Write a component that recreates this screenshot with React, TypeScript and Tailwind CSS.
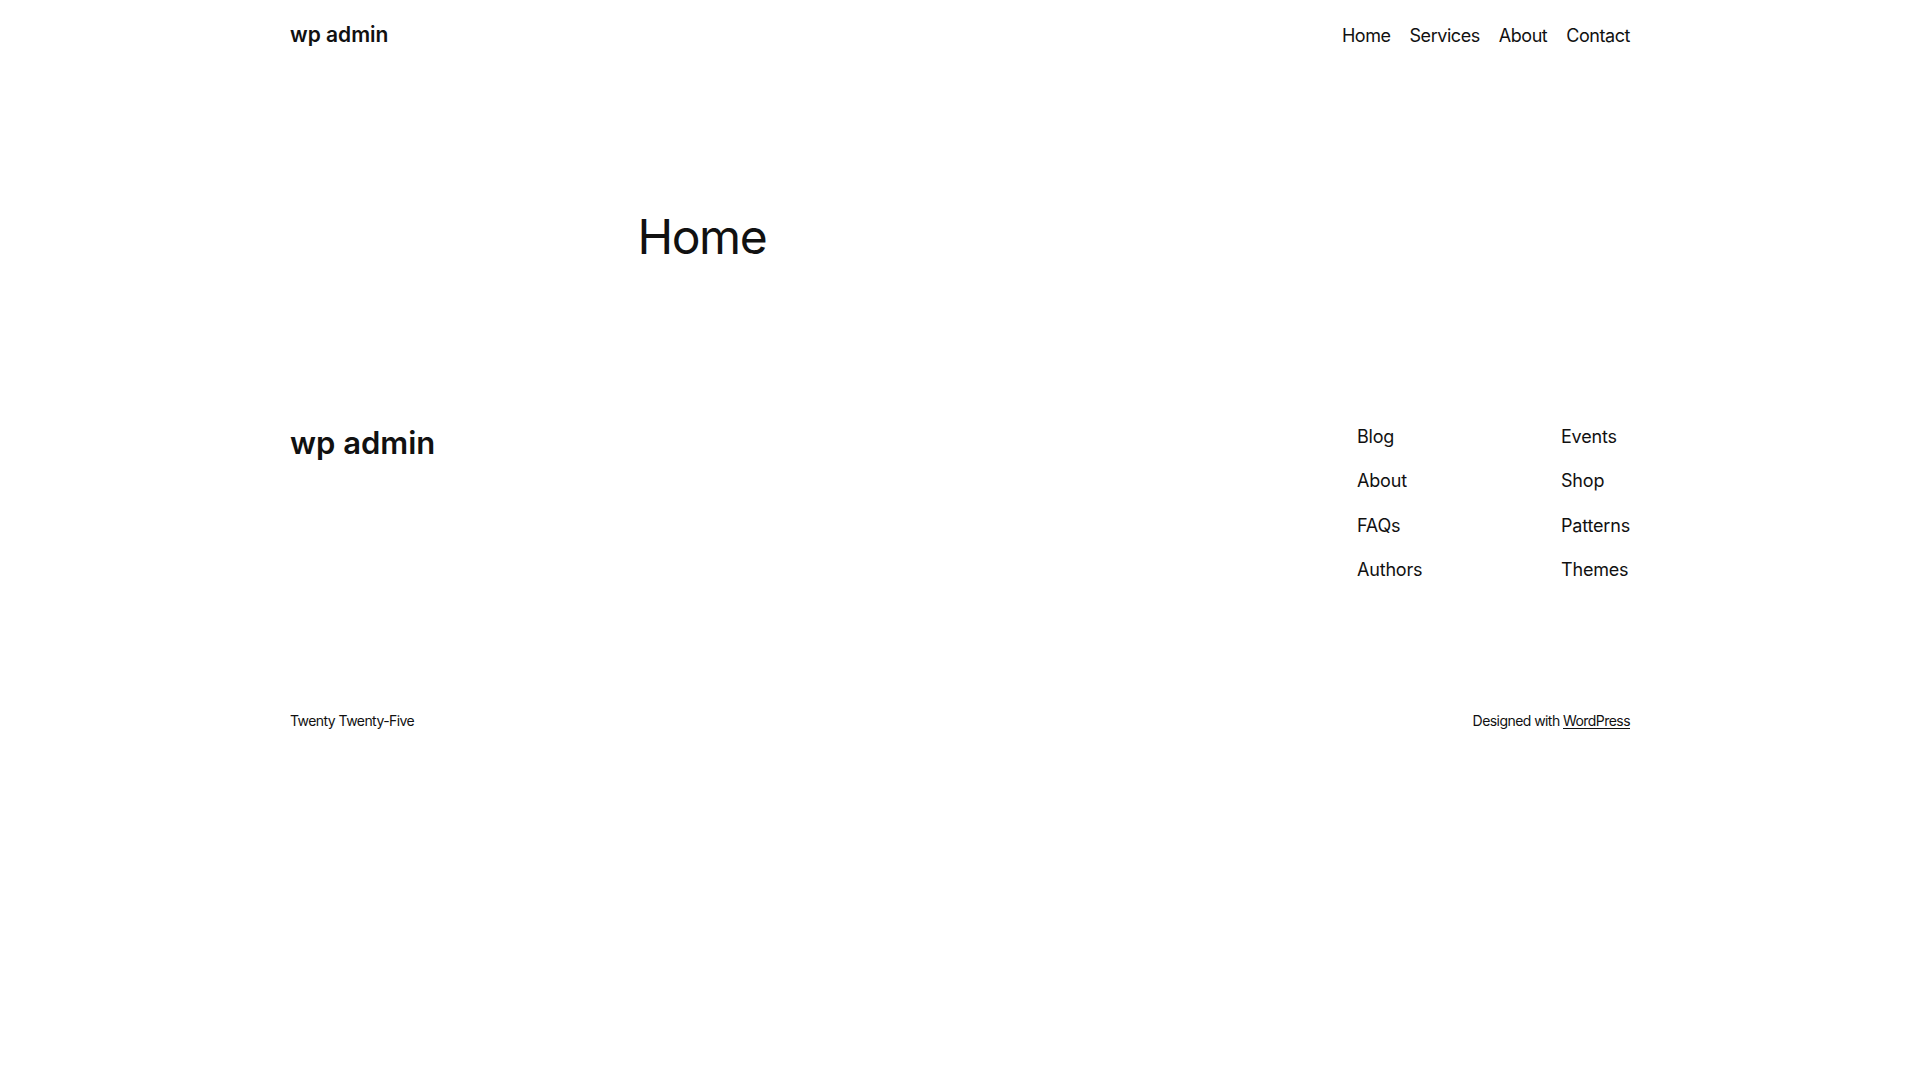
const headerLinks = ['Home', 'Services', 'About', 'Contact'];
const footerColumns = [
  ['Blog', 'About', 'FAQs', 'Authors'],
  ['Events', 'Shop', 'Patterns', 'Themes'],
];

const SiteHeader = () => (
  <header className="mx-auto flex h-[70px] w-[1340px] items-center justify-between">
    <a href="#" className="text-[21px] font-semibold text-[#111111]">
      wp admin
    </a>
    <nav className="flex items-center gap-[19px]">
      {headerLinks.map((link) => (
        <a key={link} href="#" className="text-[18px] tracking-[-0.025em] text-[#111111]">
          {link}
        </a>
      ))}
    </nav>
  </header>
);

const SiteFooter = () => (
  <footer className="mx-auto w-[1340px] pt-[160px]">
    <div className="flex items-start justify-between">
      <a href="#" className="mt-[1px] text-[31px] leading-[36px] font-semibold text-[#111111]">
        wp admin
      </a>
      <div className="flex">
        {footerColumns.map((column, colIndex) => (
          <ul
            key={colIndex}
            className={`flex flex-col gap-[19.3px] ${colIndex === 0 ? 'w-[204px]' : ''}`}
          >
            {column.map((item) => (
              <li key={item}>
                <a href="#" className="text-[18px] leading-[25px] tracking-[-0.01em] text-[#111111]">
                  {item}
                </a>
              </li>
            ))}
          </ul>
        ))}
      </div>
    </div>

    <div className="mt-[129px] flex items-center justify-between text-[14px] leading-[20px] tracking-[-0.04em] text-[#111111]">
      <p>Twenty Twenty-Five</p>
      <p>
        Designed with{' '}
        <a href="#" className="underline underline-offset-2">
          WordPress
        </a>
      </p>
    </div>
  </footer>
);

export default function App() {
  return (
    <div className="min-h-screen bg-white font-['Inter',sans-serif] text-[#111111]">
      <SiteHeader />
      <main className="mx-auto w-[645px] pt-[140px]">
        <h1 className="text-[48px] leading-[54px] font-normal tracking-[-0.03em]">Home</h1>
      </main>
      <SiteFooter />
    </div>
  );
}
